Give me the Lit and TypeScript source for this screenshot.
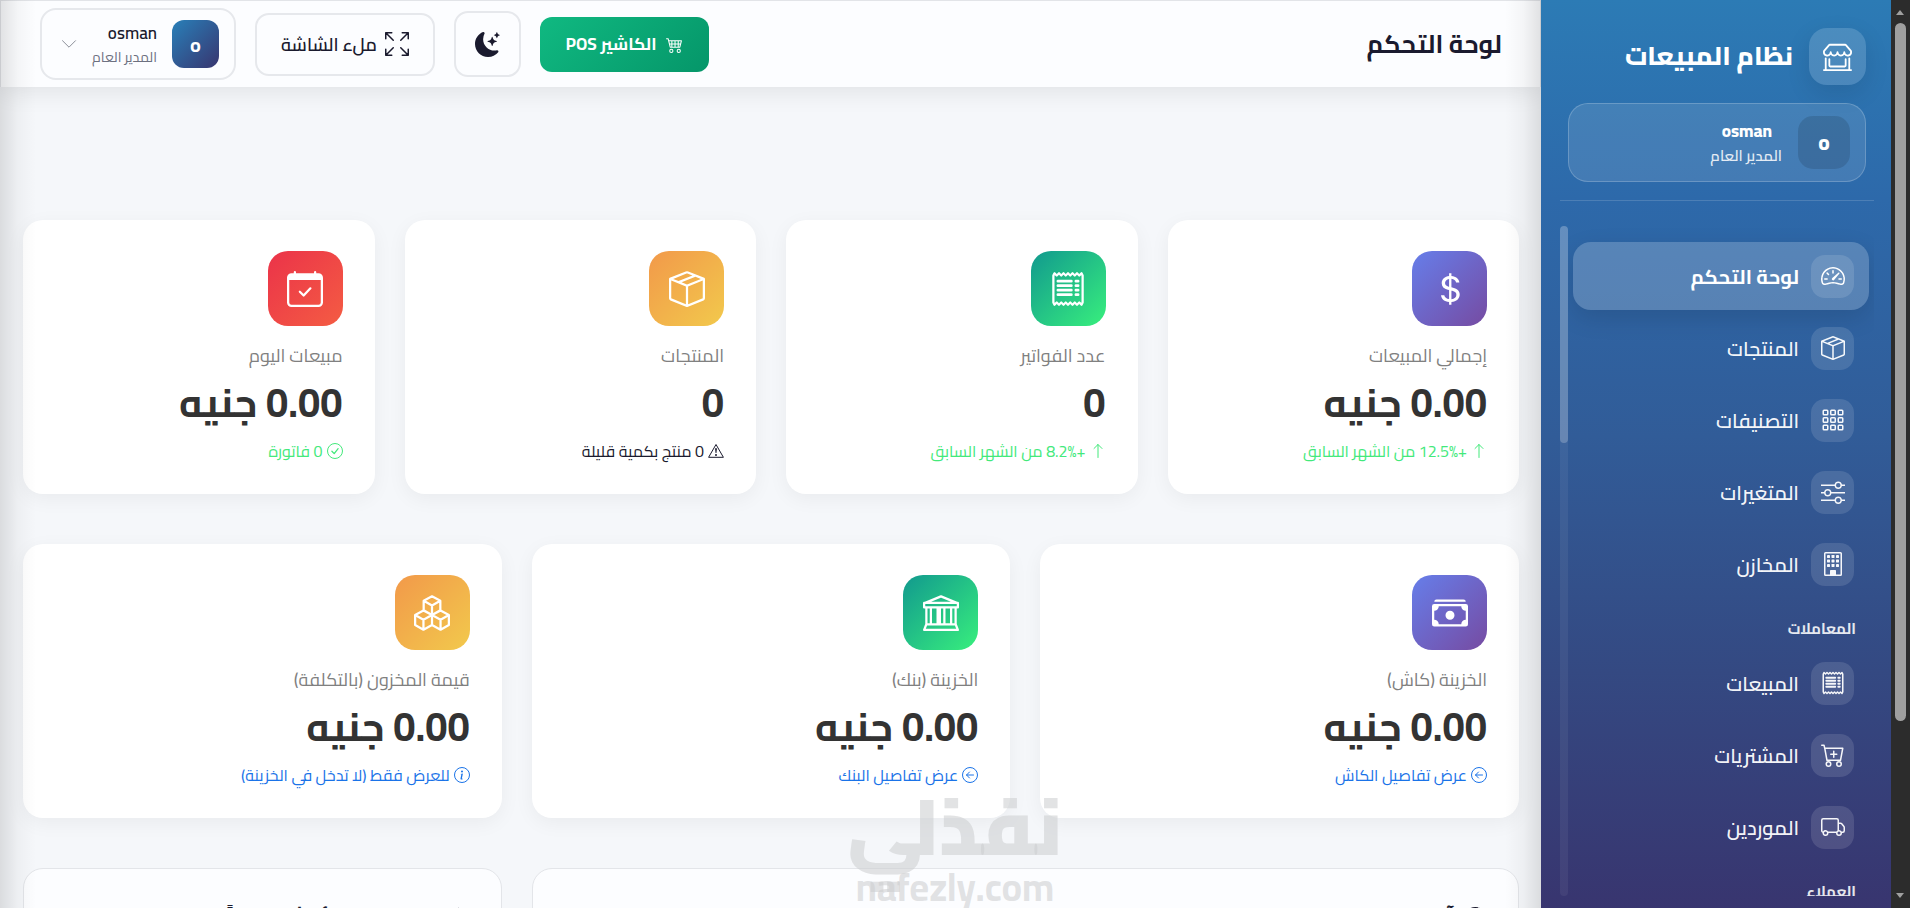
import { LitElement, html, css, svg } from "lit";
import { customElement, property } from "lit/decorators.js";
import { classMap } from "lit/directives/class-map.js";

const lineRows = [4.5, 6.5, 8.5, 10.5];

const glyphs: Record<string, unknown> = {
  shop: svg`<path d="M2.97 1.35A1 1 0 0 1 3.73 1h8.54a1 1 0 0 1 .76.35l2.609 3.044A1.5 1.5 0 0 1 16 5.37v.255a2.375 2.375 0 0 1-4.25 1.458A2.37 2.37 0 0 1 9.875 8 2.37 2.37 0 0 1 8 7.083 2.37 2.37 0 0 1 6.125 8a2.37 2.37 0 0 1-1.875-.917A2.375 2.375 0 0 1 0 5.625V5.37a1.5 1.5 0 0 1 .361-.976zm1.78 4.275a1.375 1.375 0 0 0 2.75 0 .5.5 0 0 1 1 0 1.375 1.375 0 0 0 2.75 0 .5.5 0 0 1 1 0 1.375 1.375 0 1 0 2.75 0V5.37a.5.5 0 0 0-.12-.325L12.27 2H3.73L1.12 5.045A.5.5 0 0 0 1 5.37v.255a1.375 1.375 0 0 0 2.75 0 .5.5 0 0 1 1 0M1.5 8.5A.5.5 0 0 1 2 9v6h12V9a.5.5 0 0 1 1 0v6h.5a.5.5 0 0 1 0 1H.5a.5.5 0 0 1 0-1H1V9a.5.5 0 0 1 .5-.5m2 .5a.5.5 0 0 1 .5.5V13h8V9.5a.5.5 0 0 1 1 0V13a1 1 0 0 1-1 1H4a1 1 0 0 1-1-1V9.5a.5.5 0 0 1 .5-.5"/>`,
  gauge: svg`<path d="M8 4a.5.5 0 0 1 .5.5V6a.5.5 0 0 1-1 0V4.5A.5.5 0 0 1 8 4M3.732 5.732a.5.5 0 0 1 .707 0l.915.914a.5.5 0 1 1-.708.708l-.914-.915a.5.5 0 0 1 0-.707M2 10a.5.5 0 0 1 .5-.5h1.586a.5.5 0 0 1 0 1H2.5A.5.5 0 0 1 2 10m9.5 0a.5.5 0 0 1 .5-.5h1.5a.5.5 0 0 1 0 1H12a.5.5 0 0 1-.5-.5m.754-4.246a.39.39 0 0 0-.527-.02L7.547 9.31a.91.91 0 1 0 1.302 1.258l3.434-4.297a.39.39 0 0 0-.029-.518z"/><path fill-rule="evenodd" d="M0 10a8 8 0 1 1 15.547 2.661c-.442 1.253-1.845 1.602-2.932 1.25C11.309 13.488 9.475 13 8 13c-1.474 0-3.31.488-4.615.911-1.087.352-2.49.003-2.932-1.25A8 8 0 0 1 0 10m8-7a7 7 0 0 0-6.603 9.329c.203.575.923.876 1.68.63C4.397 12.533 6.358 12 8 12s3.604.532 4.923.96c.757.245 1.477-.056 1.68-.631A7 7 0 0 0 8 3"/>`,
  box: svg`<path d="M8.186 1.113a.5.5 0 0 0-.372 0L1.846 3.5l2.404.961L10.404 2zm3.564 1.426L5.596 5 8 5.961 14.154 3.5zm3.25 1.7-6.5 2.6v7.922l6.5-2.6V4.24zM7.5 14.762V6.838L1 4.239v7.923zM7.443.184a1.5 1.5 0 0 1 1.114 0l7.129 2.852A.5.5 0 0 1 16 3.5v8.662a1 1 0 0 1-.629.928l-7.185 2.874a.5.5 0 0 1-.372 0L.63 13.09a1 1 0 0 1-.63-.928V3.5a.5.5 0 0 1 .314-.464z"/>`,
  grid: svg`<g fill="none" stroke="currentColor">${[1.5, 6.5, 11.5].map((y) => [1.5, 6.5, 11.5].map((x) => svg`<rect x=${x} y=${y} width="3" height="3" rx=".5"/>`))}</g>`,
  sliders: svg`<path fill-rule="evenodd" d="M11.5 2a1.5 1.5 0 1 0 0 3 1.5 1.5 0 0 0 0-3M9.05 3a2.5 2.5 0 0 1 4.9 0H16v1h-2.05a2.5 2.5 0 0 1-4.9 0H0V3zM4.5 7a1.5 1.5 0 1 0 0 3 1.5 1.5 0 0 0 0-3M2.05 8a2.5 2.5 0 0 1 4.9 0H16v1H6.95a2.5 2.5 0 0 1-4.9 0H0V8zm9.45 4a1.5 1.5 0 1 0 0 3 1.5 1.5 0 0 0 0-3m-2.45 1a2.5 2.5 0 0 1 4.9 0H16v1h-2.05a2.5 2.5 0 0 1-4.9 0H0v-1z"/>`,
  building: svg`<path fill-rule="evenodd" d="M3 0h10a1 1 0 0 1 1 1v14a1 1 0 0 1-1 1H3a1 1 0 0 1-1-1V1a1 1 0 0 1 1-1m0 1v14h3v-2.500a.5.5 0 0 1 .5-.5h3a.5.5 0 0 1 .5.5V15h3V1z"/><g>${[2, 5, 8].map((y) => [4, 7, 10].map((x) => svg`<rect x=${x} y=${y} width="2" height="2" rx=".3"/>`))}</g>`,
  receipt: svg`<path d="M1.92.506a.5.5 0 0 1 .434.14L3 1.293l.646-.647a.5.5 0 0 1 .708 0L5 1.293l.646-.647a.5.5 0 0 1 .708 0L7 1.293l.646-.647a.5.5 0 0 1 .708 0L9 1.293l.646-.647a.5.5 0 0 1 .708 0l.646.647.646-.647a.5.5 0 0 1 .708 0l.646.647.646-.647a.5.5 0 0 1 .801.13l.5 1A.5.5 0 0 1 15 2v12a.5.5 0 0 1-.053.224l-.5 1a.5.5 0 0 1-.8.13L13 14.707l-.646.647a.5.5 0 0 1-.708 0L11 14.707l-.646.647a.5.5 0 0 1-.708 0L9 14.707l-.646.647a.5.5 0 0 1-.708 0L7 14.707l-.646.647a.5.5 0 0 1-.708 0L5 14.707l-.646.647a.5.5 0 0 1-.708 0L3 14.707l-.646.647a.5.5 0 0 1-.801-.13l-.5-1A.5.5 0 0 1 1 14V2a.5.5 0 0 1 .053-.224l.5-1a.5.5 0 0 1 .367-.27m.217 1.338L2 2.118v11.764l.137.274.51-.51a.5.5 0 0 1 .707 0l.646.647.646-.646a.5.5 0 0 1 .708 0l.646.646.646-.646a.5.5 0 0 1 .708 0l.646.646.646-.646a.5.5 0 0 1 .708 0l.646.646.646-.646a.5.5 0 0 1 .708 0l.646.646.646-.646a.5.5 0 0 1 .708 0l.509.509.137-.274V2.118l-.137-.274-.51.51a.5.5 0 0 1-.707 0L12 1.707l-.646.647a.5.5 0 0 1-.708 0L10 1.707l-.646.647a.5.5 0 0 1-.708 0L8 1.707l-.646.647a.5.5 0 0 1-.708 0L6 1.707l-.646.647a.5.5 0 0 1-.708 0L4 1.707l-.646.647a.5.5 0 0 1-.708 0z"/><g fill="none" stroke="currentColor" stroke-width="1.200" stroke-linecap="round">${lineRows.map((y) => svg`<path d="M3.500 ${y}h6M11.500 ${y}h1"/>`)}</g>`,
  cartPlus: svg`<path d="M9 5.5a.5.5 0 0 0-1 0V7H6.5a.5.5 0 0 0 0 1H8v1.500a.5.5 0 0 0 1 0V8h1.500a.5.5 0 0 0 0-1H9z"/><path d="M.5 1a.5.5 0 0 0 0 1h1.110l.401 1.607 1.498 7.985A.5.5 0 0 0 4 12h1a2 2 0 1 0 0 4 2 2 0 0 0 0-4h7a2 2 0 1 0 0 4 2 2 0 0 0 0-4h1a.5.5 0 0 0 .491-.408l1.500-8A.5.5 0 0 0 14.500 3H2.890l-.405-1.621A.5.5 0 0 0 2 1zm3.915 10L3.102 4h10.796l-1.313 7zM6 14a1 1 0 1 1-2 0 1 1 0 0 1 2 0m7 0a1 1 0 1 1-2 0 1 1 0 0 1 2 0"/>`,
  truck: svg`<path d="M0 3.5A1.5 1.5 0 0 1 1.5 2h9A1.5 1.5 0 0 1 12 3.500V5h1.020a1.500 1.500 0 0 1 1.170.563l1.481 1.850a1.500 1.500 0 0 1 .329.938V10.500a1.500 1.500 0 0 1-1.500 1.500H14a2 2 0 1 1-4 0H5a2 2 0 1 1-3.998-.085A1.500 1.500 0 0 1 0 10.500zm1.294 7.456A2 2 0 0 1 4.732 11h5.536a2 2 0 0 1 .732-.732V3.500a.5.5 0 0 0-.5-.5h-9a.5.5 0 0 0-.5.5v7a.5.5 0 0 0 .294.456M12 10a2 2 0 0 1 1.732 1h.768a.5.5 0 0 0 .5-.5V8.350a.5.5 0 0 0-.110-.312l-1.480-1.850A.5.5 0 0 0 13.020 6H12zm-9 1a1 1 0 1 0 0 2 1 1 0 0 0 0-2m9 0a1 1 0 1 0 0 2 1 1 0 0 0 0-2"/>`,
  cart: svg`<path d="M0 2.500A.5.5 0 0 1 .5 2H2a.5.5 0 0 1 .485.379L2.890 4H14.500a.5.5 0 0 1 .485.621l-1.500 6A.5.5 0 0 1 13 11H4a.5.5 0 0 1-.485-.379L1.610 3H.5a.5.5 0 0 1-.5-.5M3.140 5l.5 2H5V5zM6 5v2h2V5zm3 0v2h2V5zm3 0v2h1.360l.5-2zm1.110 3H12v2h.610zM11 8H9v2h2zM8 8H6v2h2zM5 8H3.890l.5 2H5zm0 5a1 1 0 1 0 0 2 1 1 0 0 0 0-2m-2 1a2 2 0 1 1 4 0 2 2 0 0 1-4 0m9-1a1 1 0 1 0 0 2 1 1 0 0 0 0-2m-2 1a2 2 0 1 1 4 0 2 2 0 0 1-4 0"/>`,
  moon: svg`<path d="M6 .278a.77.77 0 0 1 .08.858 7.2 7.2 0 0 0-.878 3.460c0 4.021 3.278 7.277 7.318 7.277q.792-.001 1.533-.160a.79.79 0 0 1 .810.316.73.73 0 0 1-.031.893A8.350 8.350 0 0 1 8.344 16C3.734 16 0 12.286 0 7.710 0 4.266 2.114 1.312 5.124.060A.75.75 0 0 1 6 .278"/><path d="M10.794 3.148a.217.217 0 0 1 .412 0l.387 1.162c.173.518.579.924 1.097 1.097l1.162.387a.217.217 0 0 1 0 .412l-1.162.387a1.730 1.730 0 0 0-1.097 1.097l-.387 1.162a.217.217 0 0 1-.412 0l-.387-1.162A1.730 1.730 0 0 0 9.310 6.593l-1.162-.387a.217.217 0 0 1 0-.412l1.162-.387a1.730 1.730 0 0 0 1.097-1.097zM13.863.099a.145.145 0 0 1 .274 0l.258.774c.115.346.386.617.732.732l.774.258a.145.145 0 0 1 0 .274l-.774.258a1.160 1.160 0 0 0-.732.732l-.258.774a.145.145 0 0 1-.274 0l-.258-.774a1.160 1.160 0 0 0-.732-.732l-.774-.258a.145.145 0 0 1 0-.274l.774-.258c.346-.115.617-.386.732-.732z"/>`,
  fullscreen: svg`<path fill="none" stroke="currentColor" stroke-linecap="round" stroke-linejoin="round" d="M10.500 5.500l5-5M11.500.5h4v4M5.500 5.500l-5-5M4.500.5h-4v4M10.500 10.500l5 5M11.500 15.500h4v-4M5.500 10.500l-5 5M4.500 15.500h-4v-4"/>`,
  dollar: svg`<path d="M4 10.781c.148 1.667 1.513 2.850 3.591 3.003V15h1.043v-1.216c2.270-.179 3.678-1.438 3.678-3.300 0-1.590-.947-2.510-2.956-3.028l-.722-.187V3.467c1.122.110 1.879.714 2.070 1.616h1.470c-.166-1.600-1.540-2.748-3.540-2.875V1H7.591v1.233c-1.939.230-3.270 1.472-3.270 3.156 0 1.454.966 2.483 2.661 2.917l.610.162v4.031c-1.149-.170-1.940-.800-2.131-1.718zm3.391-3.836c-1.043-.263-1.600-.825-1.600-1.616 0-.944.704-1.641 1.800-1.828v3.495l-.200-.050zm1.591 1.872c1.287.323 1.852.859 1.852 1.769 0 1.097-.826 1.828-2.200 1.939V8.730z"/>`,
  calendar: svg`<path fill-rule="evenodd" d="M3.500 0a.5.5 0 0 1 .5.5V1h8V.5a.5.5 0 0 1 1 0V1h1a2 2 0 0 1 2 2v11a2 2 0 0 1-2 2H2a2 2 0 0 1-2-2V3a2 2 0 0 1 2-2h1V.5a.5.5 0 0 1 .5-.5M1 4v10a1 1 0 0 0 1 1h12a1 1 0 0 0 1-1V4z"/><path fill="none" stroke="currentColor" stroke-linecap="round" stroke-linejoin="round" d="M5.700 9.200l1.700 1.700 3-3.200"/>`,
  cash: svg`<path d="M1 3a1 1 0 0 1 1-1h12a1 1 0 0 1 1 1zm7 8a2 2 0 1 0 0-4 2 2 0 0 0 0 4"/><path d="M0 5a1 1 0 0 1 1-1h14a1 1 0 0 1 1 1v8a1 1 0 0 1-1 1H1a1 1 0 0 1-1-1zm3 0a2 2 0 0 1-2 2v4a2 2 0 0 1 2 2h10a2 2 0 0 1 2-2V7a2 2 0 0 1-2-2z"/>`,
  bank: svg`<path fill="none" stroke="currentColor" stroke-linejoin="round" d="M1 3.500L8 .6l7 2.900M.5 3.500h15v2H.5zM1.500 5.500v7.500M3.500 5.500v7.500M6.500 5.500v7.500M5.500 5.500h5M7.500 5.500v7.500M9.500 5.500v7.500M12.500 5.500v7.500M14.500 5.500v7.500M1.500 13h13l1 2.500H.5z"/>`,
  boxes: svg`<path fill="none" stroke="currentColor" stroke-linejoin="round" d="M8 .6l3.700 2v4.200L8 8.900 4.300 6.800V2.600zM4.300 2.600L8 4.700l3.700-2.100M8 4.700v4.200M4.200 6.900l3.800 2v4.400l-3.800 2.100-3.700-2.100V8.900zM.5 8.900l3.700 2.100L8 8.900M4.200 11v4.400M11.800 6.900l3.700 2v4.400l-3.700 2.100L8 13.300V8.900zM8 8.900l3.800 2.100 3.700-2.100M11.800 11v4.400"/>`,
  up: svg`<path fill="none" stroke="currentColor" stroke-linecap="round" stroke-linejoin="round" d="M8 14.500v-13M4 5.500l4-4 4 4"/>`,
  warning: svg`<path fill="none" stroke="currentColor" stroke-linejoin="round" d="M8 1.500l7.400 12.800H.6z"/><path d="M7.100 5.900a.9.9 0 0 1 1.800 0l-.4 3.600a.5.5 0 0 1-1 0zM7 12a1 1 0 1 1 2 0 1 1 0 0 1-2 0"/>`,
  check: svg`<circle cx="8" cy="8" r="7.500" fill="none" stroke="currentColor"/><path fill="none" stroke="currentColor" stroke-linecap="round" stroke-linejoin="round" stroke-width="1.300" d="M4.900 8.300l2.300 2.300 3.900-4.900"/>`,
  back: svg`<circle cx="8" cy="8" r="7.500" fill="none" stroke="currentColor"/><path fill="none" stroke="currentColor" stroke-linecap="round" stroke-linejoin="round" d="M11.500 8h-7M7.500 5l-3 3 3 3"/>`,
  info: svg`<circle cx="8" cy="8" r="7.500" fill="none" stroke="currentColor"/><path d="M8.930 6.588l-2.290.287-.082.380.450.083c.294.070.352.176.288.469l-.738 3.468c-.194.897.105 1.319.808 1.319.545 0 1.178-.252 1.465-.598l.088-.416c-.200.176-.492.246-.686.246-.275 0-.375-.193-.304-.533zM9 4.500a1 1 0 1 1-2 0 1 1 0 0 1 2 0"/>`,
  down: svg`<path fill="none" stroke="currentColor" stroke-linecap="round" stroke-linejoin="round" d="M1.500 4.700L8 11.200l6.500-6.500"/>`,
  history: svg`<g fill="none" stroke="currentColor" stroke-linecap="round"><path d="M8 .5a7.500 7.500 0 1 0 5.300 12.800"/><path stroke-dasharray="1.600 1.400" d="M8 .5a7.500 7.500 0 0 1 5.300 12.800"/><path d="M7.500 4v5l3.300 1.900"/></g>`,
  star: svg`<path d="M8 .3l2.300 4.900 5.400.7-3.900 3.800.9 5.400L8 12.500l-4.700 2.600.9-5.400L.3 5.900l5.400-.7z"/>`,
};

@customElement("app-icon")
class AppIcon extends LitElement {
  @property() name = "";
  static styles = css`
    :host { display: inline-flex; flex: none; width: 1em; height: 1em; }
    svg { width: 100%; height: 100%; display: block; overflow: visible; }
  `;
  render() {
    return html`<svg viewBox="0 0 16 16" fill="currentColor" aria-hidden="true">${glyphs[this.name]}</svg>`;
  }
}

interface Stat {
  icon: string;
  tone: string;
  label: string;
  value: string;
  note: string;
  noteIcon: string;
  noteTone: string;
  href?: string;
}

@customElement("stat-card")
class StatCard extends LitElement {
  @property({ attribute: false }) stat!: Stat;
  static styles = css`
    :host {
      display: flex; flex-direction: column; align-items: flex-start;
      padding: 31px 32px 28px; border-radius: 20px; background: #fff;
      box-shadow: 0 5px 20px rgba(0, 0, 0, 0.05);
    }
    .tile {
      display: grid; place-items: center; width: 75px; height: 75px;
      border-radius: 20px; color: #fff; font-size: 36px; margin-bottom: 16px;
    }
    .violet { background: linear-gradient(135deg, #667eea, #764ba2); }
    .green { background: linear-gradient(135deg, #11998e, #38ef7d); }
    .amber { background: linear-gradient(135deg, #f2994a, #f2c94c); }
    .red { background: linear-gradient(135deg, #eb3349, #f45c43); }
    .label { color: #808080; font-size: 18px; line-height: 28px; }
    .value { color: #333; font-size: 40px; line-height: 60px; font-weight: 700; margin: 3px 0; }
    .note { display: flex; align-items: center; gap: 4px; font-size: 16px; line-height: 30px; text-decoration: none; }
    .up { color: #43e97b; }
    .plain { color: #1a1a2e; }
    .link { color: #1a73e8; }
  `;
  render() {
    const s = this.stat;
    const body = html`<app-icon name=${s.noteIcon}></app-icon><span>${s.note}</span>`;
    return html`
      <div class="tile ${s.tone}"><app-icon name=${s.icon}></app-icon></div>
      <div class="label">${s.label}</div>
      <div class="value">${s.value}</div>
      ${s.href
        ? html`<a class="note ${s.noteTone}" href=${s.href}>${body}</a>`
        : html`<div class="note ${s.noteTone}">${body}</div>`}
    `;
  }
}

const topStats: Stat[] = [
  { icon: "dollar", tone: "violet", label: "إجمالي المبيعات", value: "0.00 جنيه", note: "+12.5% من الشهر السابق", noteIcon: "up", noteTone: "up" },
  { icon: "receipt", tone: "green", label: "عدد الفواتير", value: "0", note: "+8.2% من الشهر السابق", noteIcon: "up", noteTone: "up" },
  { icon: "box", tone: "amber", label: "المنتجات", value: "0", note: "0 منتج بكمية قليلة", noteIcon: "warning", noteTone: "plain" },
  { icon: "calendar", tone: "red", label: "مبيعات اليوم", value: "0.00 جنيه", note: "0 فاتورة", noteIcon: "check", noteTone: "up" },
];

const cashStats: Stat[] = [
  { icon: "cash", tone: "violet", label: "الخزينة (كاش)", value: "0.00 جنيه", note: "عرض تفاصيل الكاش", noteIcon: "back", noteTone: "link", href: "#cash" },
  { icon: "bank", tone: "green", label: "الخزينة (بنك)", value: "0.00 جنيه", note: "عرض تفاصيل البنك", noteIcon: "back", noteTone: "link", href: "#bank" },
  { icon: "boxes", tone: "amber", label: "قيمة المخزون (بالتكلفة)", value: "0.00 جنيه", note: "للعرض فقط (لا تدخل في الخزينة)", noteIcon: "info", noteTone: "link" },
];

const menu: { title?: string; items: [string, string][] }[] = [
  { items: [["gauge", "لوحة التحكم"], ["box", "المنتجات"], ["grid", "التصنيفات"], ["sliders", "المتغيرات"], ["building", "المخازن"]] },
  { title: "المعاملات", items: [["receipt", "المبيعات"], ["cartPlus", "المشتريات"], ["truck", "الموردين"]] },
  { title: "العملاء", items: [] },
];

@customElement("app-root")
class AppRoot extends LitElement {
  static styles = css`
    :host {
      display: flex; direction: rtl; height: 100vh; overflow: hidden; position: relative;
      font-family: Cairo, "Noto Sans", sans-serif; color: #1a1a2e; background: #f5f7fa;
    }
    * { box-sizing: border-box; }
    button { font: inherit; color: inherit; cursor: pointer; }

    .page-scroll {
      flex: none; width: 19px; background: #2c2c2c; display: flex; flex-direction: column;
      align-items: center; justify-content: space-between; padding: 10px 4px 10px 3px;
    }
    .arrow { border: 4px solid transparent; flex: none; }
    .arrow.top { border-bottom: 5px solid #a0a0a0; border-top: 0; }
    .arrow.end { border-top: 5px solid #a0a0a0; border-bottom: 0; }
    .rail { flex: 1; width: 11px; margin: 8px 0; }
    .rail .thumb { height: 81%; border-radius: 6px; background: #9f9f9f; }

    .sidebar {
      flex: none; width: 350px; display: flex; flex-direction: column; color: #fff; z-index: 2;
      padding: 28px 17px 12px 19px; overflow: hidden;
      background: linear-gradient(180deg, #2c7bb5 0%, #2d69aa 22%, #315c98 48%, #344982 74%, #38356f 100%);
    }
    .brand { display: flex; align-items: center; gap: 16px; padding: 0 8px; }
    .brand-tile {
      width: 57px; height: 57px; border-radius: 18px; display: grid; place-items: center; font-size: 29px;
      background: rgba(255, 255, 255, 0.15); box-shadow: 0 8px 24px rgba(0, 0, 0, 0.1);
    }
    .brand-name { font-size: 26px; line-height: 36px; font-weight: 800; margin: 0 0 2px; }
    .profile {
      display: flex; align-items: center; gap: 16px; margin: 18px 8px; height: 79px; padding: 0 15px; flex: none;
      border: 1px solid rgba(255, 255, 255, 0.2); border-radius: 20px; background: rgba(255, 255, 255, 0.11);
    }
    .initial { width: 52px; height: 53px; border-radius: 15px; background: rgba(0, 0, 0, 0.12); display: grid; place-items: center; font-size: 21px; font-weight: 800; }
    .who { display: flex; flex-direction: column; }
    .who strong { font-size: 17px; line-height: 26px; font-weight: 800; padding-inline-start: 10px; }
    .who span { font-size: 15px; line-height: 24px; font-weight: 600; opacity: 0.85; }
    .rule { border: 0; border-top: 1px solid rgba(255, 255, 255, 0.15); margin: 0; width: 100%; flex: none; }
    .menu { flex: 1; min-height: 0; display: flex; margin-top: 25px; }
    .menu nav { flex: 1; overflow: hidden; padding: 16px 5px 0; display: flex; flex-direction: column; gap: 4px; }
    .menu-rail { width: 8px; border-radius: 4px; background: rgba(255, 255, 255, 0.06); }
    .menu-rail .thumb { height: 217px; border-radius: 4px; background: rgba(255, 255, 255, 0.22); }
    .item {
      flex: none; display: flex; align-items: center; gap: 12px; height: 68px; padding: 0 15px; border-radius: 18px;
      color: rgba(255, 255, 255, 0.95); text-decoration: none; font-size: 20px; font-weight: 600;
    }
    .item.active { background: rgba(255, 255, 255, 0.2); font-weight: 700; color: #fff; box-shadow: 0 8px 24px rgba(0, 0, 0, 0.12); }
    .item-icon { width: 43px; height: 43px; border-radius: 14px; background: rgba(255, 255, 255, 0.12); display: grid; place-items: center; font-size: 24px; }
    .section { flex: none; margin: 0; padding: 11px 13px 0; font-size: 15px; line-height: 32px; font-weight: 700; opacity: 0.88; }

    .main { flex: 1; min-width: 0; display: flex; flex-direction: column; position: relative; }
    .edge { position: absolute; top: 0; bottom: 0; width: 36px; pointer-events: none; z-index: 3; }
    .edge.start { right: 0; background: linear-gradient(to left, rgba(0, 0, 0, 0.11), rgba(0, 0, 0, 0.03) 50%, transparent); }
    .edge.end { left: 0; background: linear-gradient(to right, rgba(0, 0, 0, 0.11), rgba(0, 0, 0, 0.03) 50%, transparent); }
    header {
      flex: none; display: flex; align-items: center; justify-content: space-between; height: 87px; padding: 0 38px 0 39px;
      background: #fcfdff; border: 1px solid #e2e4e8; border-bottom: 0; box-shadow: 0 4px 24px rgba(0, 0, 0, 0.09); z-index: 1;
    }
    .title { margin: 0; font-size: 25px; line-height: 40px; font-weight: 700; }
    .actions { display: flex; align-items: center; gap: 19px; }
    .btn { display: flex; align-items: center; justify-content: center; border: 2px solid #e6e8ec; background: #fcfdff; border-radius: 14px; padding: 0; }
    .pos {
      border: 0; color: #fff; background: linear-gradient(135deg, #10b981, #059669); height: 55px; padding: 0 26px;
      gap: 10px; font-size: 17px; font-weight: 700; border-radius: 12px;
    }
    .theme { width: 67px; height: 66px; font-size: 25px; }
    .full { height: 63px; padding: 0 24px; gap: 8px; font-size: 18px; font-weight: 600; }
    .full app-icon { font-size: 24px; }
    .user { height: 72px; padding: 0 15px 0 19px; border-radius: 16px; gap: 15px; }
    .user .badge { width: 47px; height: 48px; border-radius: 12px; color: #fff; font-size: 20px; font-weight: 700; display: grid; place-items: center; background: linear-gradient(135deg, #2980b9, #38356f); }
    .user .names { display: flex; flex-direction: column; text-align: start; }
    .user .names b { font-size: 17px; line-height: 26px; font-weight: 600; }
    .user .names small { font-size: 14px; line-height: 22px; color: #6c7080; }
    .user > app-icon { color: #8b8f98; }

    .content { flex: 1; min-height: 0; padding: 133px 22px 0 23px; display: flex; flex-direction: column; gap: 50px; }
    .row { display: grid; gap: 30px; flex: none; }
    .four { grid-template-columns: repeat(4, 1fr); }
    .three { grid-template-columns: repeat(3, 1fr); }
    .wide { grid-column: span 2; }
    .panel { background: #fcfdff; border: 1px solid #e3e5e9; border-radius: 20px; padding: 31px; height: 320px; }
    .panel h2 { margin: 0; display: flex; align-items: center; gap: 10px; font-size: 23px; line-height: 36px; font-weight: 700; }

    .watermark {
      position: absolute; z-index: 4; left: 50%; bottom: 0; direction: ltr; text-align: center;
      transform: translateX(-50%); color: rgba(205, 206, 208, 0.58); pointer-events: none;
    }
    .watermark b { display: block; font-size: 78px; line-height: 74px; font-weight: 900; margin-bottom: 2px; }
    .watermark span { display: block; font-size: 38px; line-height: 42px; font-weight: 700; }
  `;

  render() {
    return html`
      <div class="page-scroll" aria-hidden="true">
        <i class="arrow top"></i>
        <div class="rail"><div class="thumb"></div></div>
        <i class="arrow end"></i>
      </div>

      <aside class="sidebar">
        <div class="brand">
          <div class="brand-tile"><app-icon name="shop"></app-icon></div>
          <h2 class="brand-name">نظام المبيعات</h2>
        </div>
        <div class="profile">
          <div class="initial">o</div>
          <div class="who"><strong>osman</strong><span>المدير العام</span></div>
        </div>
        <hr class="rule" />
        <div class="menu">
          <nav aria-label="القائمة">
            ${menu.map(
              (group, g) => html`
                ${group.title ? html`<h3 class="section">${group.title}</h3>` : ""}
                ${group.items.map(
                  ([icon, label], i) => html`<a class=${classMap({ item: true, active: g === 0 && i === 0 })} href="#${icon}">
                    <span class="item-icon"><app-icon name=${icon}></app-icon></span>${label}</a>`
                )}
              `
            )}
          </nav>
          <div class="menu-rail" aria-hidden="true"><div class="thumb"></div></div>
        </div>
      </aside>

      <section class="main">
        <header>
          <h1 class="title">لوحة التحكم</h1>
          <div class="actions">
            <button class="btn pos"><app-icon name="cart"></app-icon><span>الكاشير POS</span></button>
            <button class="btn theme" aria-label="الوضع الليلي"><app-icon name="moon"></app-icon></button>
            <button class="btn full"><app-icon name="fullscreen"></app-icon><span>ملء الشاشة</span></button>
            <button class="btn user">
              <span class="badge">o</span>
              <span class="names"><b>osman</b><small>المدير العام</small></span>
              <app-icon name="down"></app-icon>
            </button>
          </div>
        </header>
        <main class="content">
          <div class="row four">${topStats.map((s) => html`<stat-card .stat=${s}></stat-card>`)}</div>
          <div class="row three">${cashStats.map((s) => html`<stat-card .stat=${s}></stat-card>`)}</div>
          <div class="row three">
            <section class="panel wide"><h2><app-icon name="history"></app-icon>آخر المبيعات</h2></section>
            <section class="panel"><h2><app-icon name="star"></app-icon>المنتجات الأكثر مبيعاً</h2></section>
          </div>
        </main>
        <div class="edge start"></div>
        <div class="edge end"></div>
      </section>

      <div class="watermark"><b>نفذلي</b><span>nafezly.com</span></div>
    `;
  }
}
